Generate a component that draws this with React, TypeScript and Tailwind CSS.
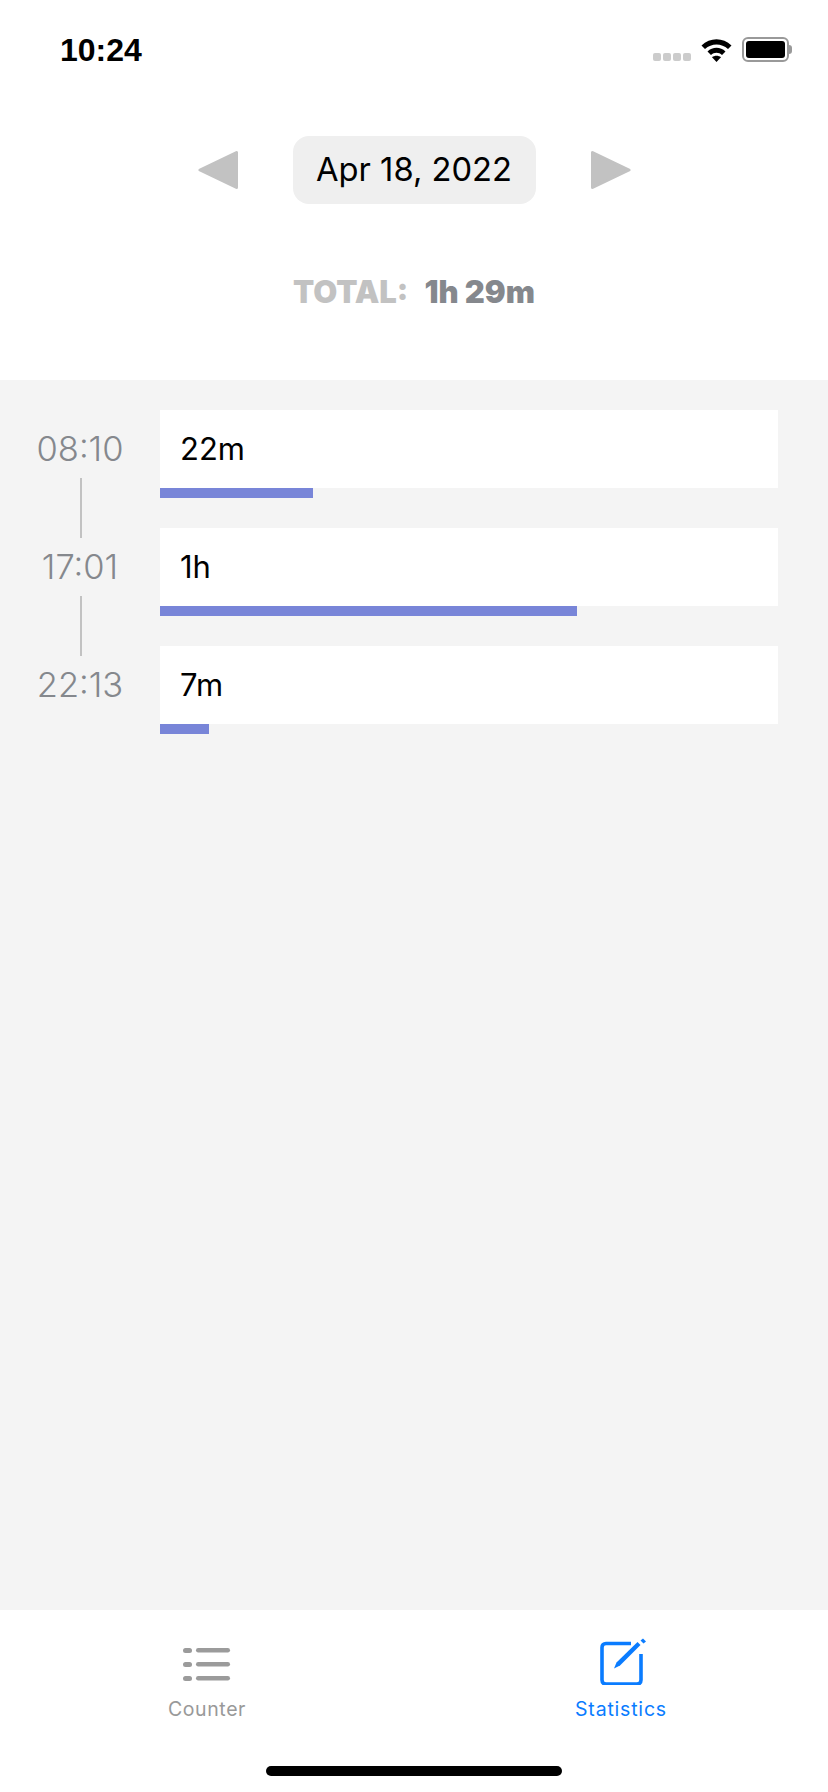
const font = { fontFamily: 'Inter, "Noto Sans", sans-serif' };

const sessions = [
  { time: '08:10', label: '22m', width: 153 },
  { time: '17:01', label: '1h', width: 417 },
  { time: '22:13', label: '7m', width: 49 },
];

const StatusBar = () => (
  <div className="flex h-[100px] shrink-0 items-start justify-between pl-[60px] pr-[36px] pt-[33px]">
    <span className="text-[32px] font-bold leading-[34px] text-black" style={{ fontFamily: '"Liberation Sans", sans-serif' }}>10:24</span>
    <div className="flex items-start pt-[4px]">
      <div className="mt-[16px] flex gap-[2px]">
        {[0, 1, 2, 3].map((i) => (
          <div key={i} className="h-[8px] w-[8px] rounded-[2px] bg-[#cccccc]" />
        ))}
      </div>
      <svg className="ml-[10px]" width="31" height="25" viewBox="0 0 31 25">
        <path d="M0.5 8.5C9 0 22 0 30.5 8.5L27 12C20.5 6 10.5 6 4 12Z" fill="#000" />
        <path d="M6.5 14.5C11.5 9.5 19.5 9.5 24.5 14.5L21 18C18 15 13 15 10 18Z" fill="#000" />
        <path d="M15.5 25L11 20.2C13.5 18.2 17.5 18.2 20 20.2Z" fill="#000" />
      </svg>
      <div className="ml-[10px] flex items-center">
        <div className="h-[25px] w-[47px] rounded-[6px] border-2 border-[#999999] p-[2px]">
          <div className="h-full w-full rounded-[3px] bg-black" />
        </div>
        <div className="h-[9px] w-[3px] rounded-r-[3px] bg-[#999999]" />
      </div>
    </div>
  </div>
);

const Arrow = ({ right }: { right?: boolean }) => (
  <svg width="41" height="40" viewBox="0 0 41 40" className={right ? '' : '-scale-x-100'}>
    <path d="M2.5 2.5V37.5L39 20Z" fill="#c2c2c2" stroke="#c2c2c2" strokeWidth="3" strokeLinejoin="round" />
  </svg>
);

const TabBar = () => (
  <div className="relative h-[182px] shrink-0 bg-white">
    <div className="grid grid-cols-2 pt-[29px]">
      <div className="flex flex-col items-center">
        <svg width="48" height="46" viewBox="0 0 48 46">
          <g fill="#9b9b9b">
            <rect x="0" y="9" width="9" height="5" rx="2.5" />
            <rect x="13" y="9" width="34" height="4.5" rx="2.2" />
            <rect x="0" y="23" width="9" height="5" rx="2.5" />
            <rect x="13" y="23" width="34" height="4.5" rx="2.2" />
            <rect x="0" y="37" width="9" height="5" rx="2.5" />
            <rect x="13" y="37" width="34" height="4.5" rx="2.2" />
          </g>
        </svg>
        <span className="mt-[13px] text-[19.5px] leading-[22px] tracking-[0.6px] text-[#999999]">Counter</span>
      </div>
      <div className="flex flex-col items-center">
        <svg width="48" height="48" viewBox="0 0 48 48" className="-mt-[2px] ml-[3px]">
          <path d="M32 6.5H7C4.5 6.5 3 8 3 10.5V43C3 45.5 4.5 47 7 47H38C40.5 47 42 45.5 42 43V17" fill="none" stroke="#0a7cff" strokeWidth="3.6" strokeLinejoin="round" />
          <path d="M15 31.5L17.5 25.5L38.5 5L41.5 8L21 28.5Z" fill="#0a7cff" />
          <path d="M41.5 3.5L44 1.5L47 4.5L44.5 6.5Z" fill="#0a7cff" />
        </svg>
        <span className="mt-[13px] text-[19.5px] leading-[22px] tracking-[0.8px] text-[#0a7cff]">Statistics</span>
      </div>
    </div>
    <div className="absolute bottom-[16px] left-[266px] h-[10px] w-[296px] rounded-full bg-black" />
  </div>
);

export default function App() {
  return (
    <div className="flex h-[1792px] w-[828px] flex-col overflow-hidden bg-white" style={font}>
      <StatusBar />
      <div className="flex h-[280px] shrink-0 flex-col items-center">
        <div className="mt-[36px] flex items-center gap-[54px]">
          <Arrow />
          <div className="flex h-[68px] w-[243px] items-center justify-center rounded-[16px] bg-[#efefef] text-[32.7px] text-black">
            Apr 18, 2022
          </div>
          <Arrow right />
        </div>
        <div className="mt-[70px] flex items-baseline gap-[16px] text-[31px] font-black leading-[36px]">
          <span className="text-[#c2c2c2]">TOTAL:</span>
          <span className="text-[#85888d]">1h 29m</span>
        </div>
      </div>
      <div className="flex flex-1 bg-[#f4f4f4] pt-[30px]">
        <div className="flex w-[160px] shrink-0 flex-col items-center pt-[10px]">
          {sessions.map((s, i) => (
            <div key={s.time} className="flex flex-col items-center">
              <div className="flex h-[58px] items-center text-[34.5px] font-light text-[#85888d]">{s.time}</div>
              {i < sessions.length - 1 && <div className="ml-[2px] h-[60px] w-[2px] bg-[#c2c2c2]" />}
            </div>
          ))}
        </div>
        <div className="flex w-[618px] flex-col gap-[30px]">
          {sessions.map((s) => (
            <div key={s.time}>
              <div className="flex h-[78px] items-center bg-white pl-[20px] text-[31px] text-black">{s.label}</div>
              <div className="h-[10px] bg-[#7885d8]" style={{ width: s.width }} />
            </div>
          ))}
        </div>
      </div>
      <TabBar />
    </div>
  );
}
